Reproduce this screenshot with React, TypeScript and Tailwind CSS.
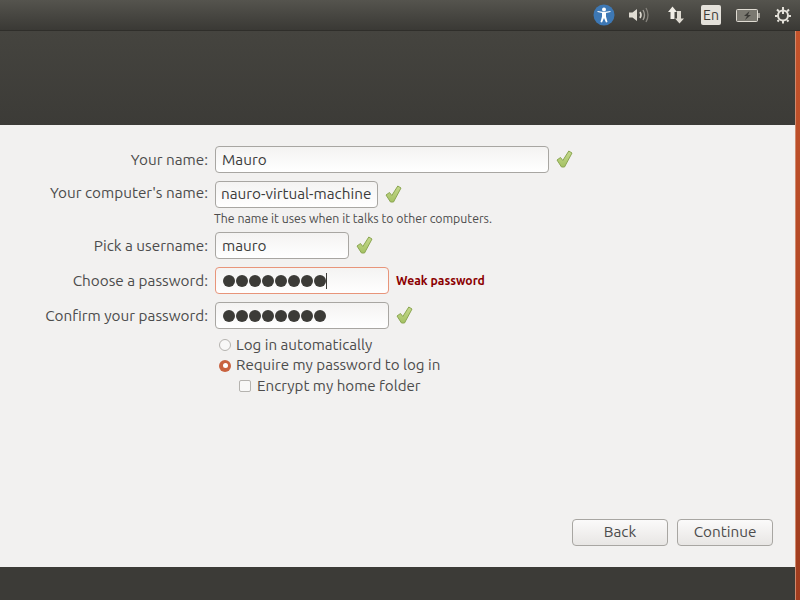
const font = "font-['Ubuntu','Open_Sans','Noto_Sans',sans-serif]";

function Check() {
  return (
    <svg width="17" height="18" viewBox="0 0 17 18" className="shrink-0">
      <defs>
        <linearGradient id="tick" x1="0" y1="0" x2="0" y2="1">
          <stop offset="0" stopColor="#c5d98c" />
          <stop offset="1" stopColor="#a5c264" />
        </linearGradient>
      </defs>
      <path
        d="M1 10 L4.5 7.5 L6.8 10.5 L12.8 1 L16 3 L8.5 17 L5.5 17 Z"
        fill="url(#tick)"
        stroke="#8ba652"
        strokeWidth="1"
        strokeLinejoin="round"
      />
    </svg>
  );
}

function Dots({ caret }: { caret?: boolean }) {
  return (
    <div className="flex items-center gap-px pt-px">
      {[0, 1, 2, 3, 4, 5, 6, 7].map((i) => (
        <span key={i} className="w-3 h-3 rounded-full bg-[#3c3b37]" />
      ))}
      {caret && <span className="w-px h-4 bg-[#3c3b37] -ml-px" />}
    </div>
  );
}

function Field({ className, children }: { className: string; children: React.ReactNode }) {
  return (
    <div
      className={`h-[27px] flex items-center rounded-[4px] border bg-gradient-to-b from-[#f4f3f2] to-white ${className}`}
    >
      {children}
    </div>
  );
}

function Row({ label, children, labelClass = "pt-[2px]" }: { label: string; children: React.ReactNode; labelClass?: string }) {
  return (
    <div className="flex items-center h-[28px]">
      <div className={`w-[208px] text-right text-[15.3px] leading-none whitespace-nowrap text-[#4c4c4c] ${labelClass}`}>{label}</div>
      <div className="ml-[7px] flex items-center">{children}</div>
    </div>
  );
}

export default function App() {
  return (
    <div className={`w-[800px] h-[600px] overflow-hidden flex flex-col bg-[#3c3b37] ${font}`}>
      <div className="h-[31px] flex items-center justify-end bg-gradient-to-b from-[#55544e] to-[#3a3935] border-b border-[#2f2e2a]">
        <svg width="22" height="22" viewBox="0 0 22 22" className="mr-[13px]">
          <circle cx="11" cy="11" r="10.5" fill="#3d78b5" />
          <circle cx="11" cy="5.5" r="2" fill="#fff" />
          <path d="M4.5 8 L9 9 L9 12.5 L7.5 18 L9 18.5 L11 14 L13 18.5 L14.5 18 L13 12.5 L13 9 L17.5 8 L17.5 7 L11 8 L4.5 7 Z" fill="#fff" />
        </svg>
        <svg width="22" height="16" viewBox="0 0 22 16" className="mr-[17px]">
          <path d="M1 5.5 H4.5 L9 2 V14 L4.5 10.5 H1 Z" fill="#dfdbd2" />
          <path d="M12 5 Q14 8 12 11" fill="none" stroke="#dfdbd2" strokeWidth="1.6" />
          <path d="M15 3 Q18 8 15 13" fill="none" stroke="#a09d96" strokeWidth="1.4" />
          <path d="M18 1 Q22 8 18 15" fill="none" stroke="#85827b" strokeWidth="1.3" />
        </svg>
        <svg width="18" height="18" viewBox="0 0 18 18" className="mr-[16px]">
          <path d="M5.5 0.5 L10 6 H7.5 V13 H3.5 V6 H1 Z" fill="#f0ede6" />
          <path d="M10 5 H14 V12.5 H17 L12.5 17.5 L8 12.5 H10 Z" fill="#dfdbd2" />
        </svg>
        <div className="w-5 h-5 mr-[15px] rounded-[2px] bg-[#e4e1da] flex items-center justify-center text-[14px] text-[#3c3b37]">En</div>
        <svg width="25" height="13" viewBox="0 0 25 13" className="mr-[13px]">
          <rect x="0.5" y="0.5" width="21" height="12" rx="1" fill="#7a7870" stroke="#dfdbd2" />
          <rect x="22" y="4" width="2" height="5" fill="#a09d96" />
          <path d="M13.5 2 L8 7 H11 L9 11 L15 6 H12 Z" fill="#3c3b37" />
        </svg>
        <svg width="18" height="18" viewBox="0 0 18 18" className="mr-[8px]">
          <g stroke="#e4e1da" fill="none">
            <circle cx="9" cy="9.5" r="5" strokeWidth="2" />
            <path d="M9 1 V8" strokeWidth="2" />
            <path d="M3 3.5 L5 5.5 M15 3.5 L13 5.5 M1 10 H3.5 M17 10 H14.5 M3.5 15.5 L5 14 M14.5 15.5 L13 14 M9 15 V17.5" strokeWidth="2" />
          </g>
        </svg>
      </div>

      <div className="flex-1 flex">
        <div className="flex-1 flex flex-col">
          <div className="h-[94px] bg-gradient-to-b from-[#45443f] to-[#3c3b37]" />
          <div className="h-[442px] bg-[#f2f1f0] relative flex flex-col pt-[20px]">
            <Row label="Your name:">
              <Field className="w-[334px] border-[#a8a6a2] pl-[6px] pt-[2px] text-[15.3px] text-[#3c3c3c]">Mauro</Field>
              <div className="ml-[7px]"><Check /></div>
            </Row>
            <div className="mt-[7px]">
              <Row label="Your computer's name:" labelClass="pb-[3px]">
                <Field className="w-[163px] border-[#a8a6a2] pl-[5px] text-[15.3px] text-[#3c3c3c] overflow-hidden whitespace-nowrap">nauro-virtual-machine</Field>
                <div className="ml-[7px]"><Check /></div>
              </Row>
            </div>
            <div className="ml-[214px] h-[17px] mt-[2px] text-[12.3px] leading-[17px] text-[#4c4c4c]">The name it uses when it talks to other computers.</div>
            <div className="mt-[4px]">
              <Row label="Pick a username:">
                <Field className="w-[134px] border-[#a8a6a2] pl-[6px] pt-[2px] text-[15.3px] text-[#3c3c3c]">mauro</Field>
                <div className="ml-[7px]"><Check /></div>
              </Row>
            </div>
            <div className="mt-[7px]">
              <Row label="Choose a password:">
                <Field className="w-[174px] border-[#e8957a] pl-[7px]"><Dots caret /></Field>
                <div className="ml-[7px] pt-[2px] text-[12.2px] font-bold text-[#8b0000]">Weak password</div>
              </Row>
            </div>
            <div className="mt-[7px]">
              <Row label="Confirm your password:">
                <Field className="w-[174px] border-[#a8a6a2] pl-[7px]"><Dots /></Field>
                <div className="ml-[7px]"><Check /></div>
              </Row>
            </div>
            <div className="ml-[219px] mt-[6px] flex flex-col text-[15.15px] text-[#4c4c4c]">
              <div className="h-[20px] flex items-center gap-[5px]">
                <span className="w-3 h-3 rounded-full border border-[#b5b3af] bg-[#f8f8f7]" />
                Log in automatically
              </div>
              <div className="h-[21px] flex items-center gap-[5px]">
                <span className="w-3 h-3 rounded-full bg-[#c9623f] flex items-center justify-center">
                  <span className="w-[5px] h-[5px] rounded-full bg-white" />
                </span>
                Require my password to log in
              </div>
              <div className="h-[20px] flex items-center gap-[6px] ml-[20px]">
                <span className="w-3 h-3 rounded-[2px] border border-[#b5b3af] bg-[#f8f8f7]" />
                Encrypt my home folder
              </div>
            </div>
            <div className="absolute right-[22px] top-[394px] flex gap-[9px]">
              <button className="w-[96px] h-[27px] rounded-[4px] border border-[#a8a6a2] bg-gradient-to-b from-[#fbfafa] to-[#e8e6e4] text-[15.3px] text-[#4c4c4c]">Back</button>
              <button className="w-[96px] h-[27px] rounded-[4px] border border-[#a8a6a2] bg-gradient-to-b from-[#fbfafa] to-[#e8e6e4] text-[15.3px] text-[#4c4c4c]">Continue</button>
            </div>
          </div>
          <div className="flex-1" />
        </div>
        <div className="w-[5px] border-l border-[#cf8a6e] bg-gradient-to-b from-[#c4532b] to-[#a03c1e]" />
      </div>
    </div>
  );
}
